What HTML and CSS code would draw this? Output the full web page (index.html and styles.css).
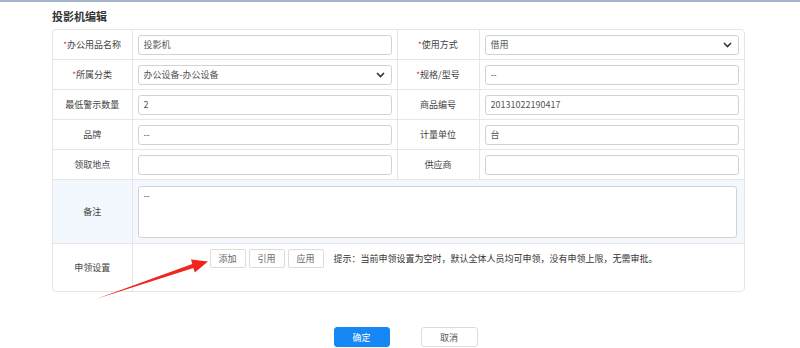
FILE: index.html
```html
<!DOCTYPE html>
<html lang="zh-CN">
<head>
  <meta charset="UTF-8" />
  <meta name="viewport" content="width=device-width, initial-scale=1" />
  <title>投影机编辑</title>
  <link rel="stylesheet" href="styles.css">
</head>
<body>

  <div class="page">
    <h3 class="page-title">投影机编辑</h3>

    <div class="form-box">
      <table class="form-table">
        <colgroup>
          <col class="col-label" />
          <col class="col-field" />
          <col class="col-label2" />
          <col />
        </colgroup>
        <tr>
          <td class="label"><span class="req">*</span>办公用品名称</td>
          <td class="field"><input type="text" value="投影机" /></td>
          <td class="label"><span class="req">*</span>使用方式</td>
          <td class="field">
            <div class="select-wrap">
              <select><option>借用</option></select>
              <svg class="chevron" width="9" height="6" viewBox="0 0 9 6"><path d="M1 1 L4.5 4.5 L8 1" fill="none" stroke="#333" stroke-width="1.6"/></svg>
            </div>
          </td>
        </tr>
        <tr>
          <td class="label"><span class="req">*</span>所属分类</td>
          <td class="field">
            <div class="select-wrap">
              <select><option>办公设备-办公设备</option></select>
              <svg class="chevron" width="9" height="6" viewBox="0 0 9 6"><path d="M1 1 L4.5 4.5 L8 1" fill="none" stroke="#333" stroke-width="1.6"/></svg>
            </div>
          </td>
          <td class="label"><span class="req">*</span>规格/型号</td>
          <td class="field"><input type="text" value="--" /></td>
        </tr>
        <tr>
          <td class="label">最低警示数量</td>
          <td class="field"><input type="text" value="2" /></td>
          <td class="label">商品编号</td>
          <td class="field"><input type="text" value="20131022190417" /></td>
        </tr>
        <tr>
          <td class="label">品牌</td>
          <td class="field"><input type="text" value="--" /></td>
          <td class="label">计量单位</td>
          <td class="field"><input type="text" value="台" /></td>
        </tr>
        <tr>
          <td class="label">领取地点</td>
          <td class="field"><input type="text" value="" /></td>
          <td class="label">供应商</td>
          <td class="field"><input type="text" value="" /></td>
        </tr>
        <tr class="remark-row">
          <td class="label">备注</td>
          <td class="field" colspan="3"><textarea>--</textarea></td>
        </tr>
        <tr class="apply-row">
          <td class="label">申领设置</td>
          <td class="field" colspan="3">
            <div class="apply-tools">
              <button class="btn-small">添加</button>
              <button class="btn-small">引用</button>
              <button class="btn-small">应用</button>
              <span class="tip">提示：当前申领设置为空时，默认全体人员均可申领，没有申领上限，无需审批。</span>
            </div>
          </td>
        </tr>
      </table>
    </div>

    <div class="form-actions">
      <button class="btn-primary">确定</button>
      <button class="btn-default">取消</button>
    </div>

    <!-- annotation arrow -->
    <svg class="mark-arrow" width="800" height="348" viewBox="0 0 800 348">
      <polygon points="96,299 193.4,268 194.8,272.4 208,261.5 191,259.6 192.3,264" fill="#f0251c"/>
    </svg>
  </div>

</body>
</html>
```

FILE: styles.css
```css
body {
  margin: 0;
  font-family: "Microsoft YaHei", "Noto Sans CJK SC", "Noto Sans", sans-serif;
  font-size: 9px;
  color: #333;
  background: #fff;
  border-top: 2px solid #a3b6cc;
}
.page {
  padding: 4px 0 0 52px;
}
.page-title {
  margin: 0 0 3px;
  font-size: 11px;
  line-height: 20px;
  font-weight: bold;
  color: #333;
}
.form-box {
  width: 693px;
  box-sizing: border-box;
  border: 1px solid #e6e6e6;
  border-radius: 4px;
  overflow: hidden;
}
.form-table {
  width: 100%;
  border-collapse: collapse;
  table-layout: fixed;
}
.col-label { width: 79px; }
.col-field { width: 265px; }
.col-label2 { width: 82px; }
.form-table td {
  border-right: 1px solid #e6e6e6;
  border-bottom: 1px solid #e6e6e6;
  height: 29px;
  padding: 0;
  vertical-align: middle;
}
.form-table td:last-child {
  border-right: none;
}
.form-table tr:last-child td {
  border-bottom: none;
}
.form-table td.label {
  text-align: center;
  color: #444;
  white-space: nowrap;
}
.req {
  color: #e02020;
  font-size: 8px;
}
.form-table td.field {
  padding: 0 5px 0 5px;
}
.field input,
.field select,
.field textarea {
  display: block;
  width: 100%;
  box-sizing: border-box;
  height: 20px;
  border: 1px solid #d2d2d2;
  border-radius: 3px;
  padding: 0 5px;
  font-family: inherit;
  font-size: 9px;
  color: #555;
  background: #fff;
  outline: none;
}
.select-wrap {
  position: relative;
}
.field select {
  appearance: none;
  -webkit-appearance: none;
  padding-right: 20px;
}
.chevron {
  position: absolute;
  right: 7px;
  top: 7px;
  pointer-events: none;
}
.remark-row td {
  background: #f2f8fd;
  height: 63px;
}
.remark-row td.field {
  padding: 0 7px 0 5px;
}
.field textarea {
  height: 52px;
  padding: 3px 5px;
  resize: none;
  line-height: 12px;
}
.apply-row td {
  height: 42px;
}
.apply-row td.field {
  vertical-align: top;
  padding: 5px 6px 0;
}
.apply-tools {
  display: flex;
  align-items: center;
  gap: 3px;
  margin-left: 71px;
}
.btn-small {
  height: 19px;
  width: 36px;
  padding: 0;
  border: 1px solid #dcdcdc;
  border-radius: 2px;
  background: #fff;
  font-family: inherit;
  font-size: 9px;
  color: #666;
  cursor: pointer;
}
.tip {
  margin-left: 7px;
  color: #333;
  white-space: nowrap;
}
.form-actions {
  width: 693px;
  display: flex;
  justify-content: center;
  gap: 31px;
  padding-left: 14px;
  box-sizing: border-box;
  margin-top: 35px;
}
.btn-primary,
.btn-default {
  height: 20px;
  border-radius: 3px;
  font-family: inherit;
  font-size: 9px;
  padding: 0;
  cursor: pointer;
}
.btn-primary {
  width: 56px;
  background: #1588f5;
  border: 1px solid #1588f5;
  color: #fff;
}
.btn-default {
  width: 57px;
  background: #fff;
  border: 1px solid #dcdcdc;
  color: #555;
}
.mark-arrow {
  position: absolute;
  top: 0;
  left: 0;
  pointer-events: none;
}
```
